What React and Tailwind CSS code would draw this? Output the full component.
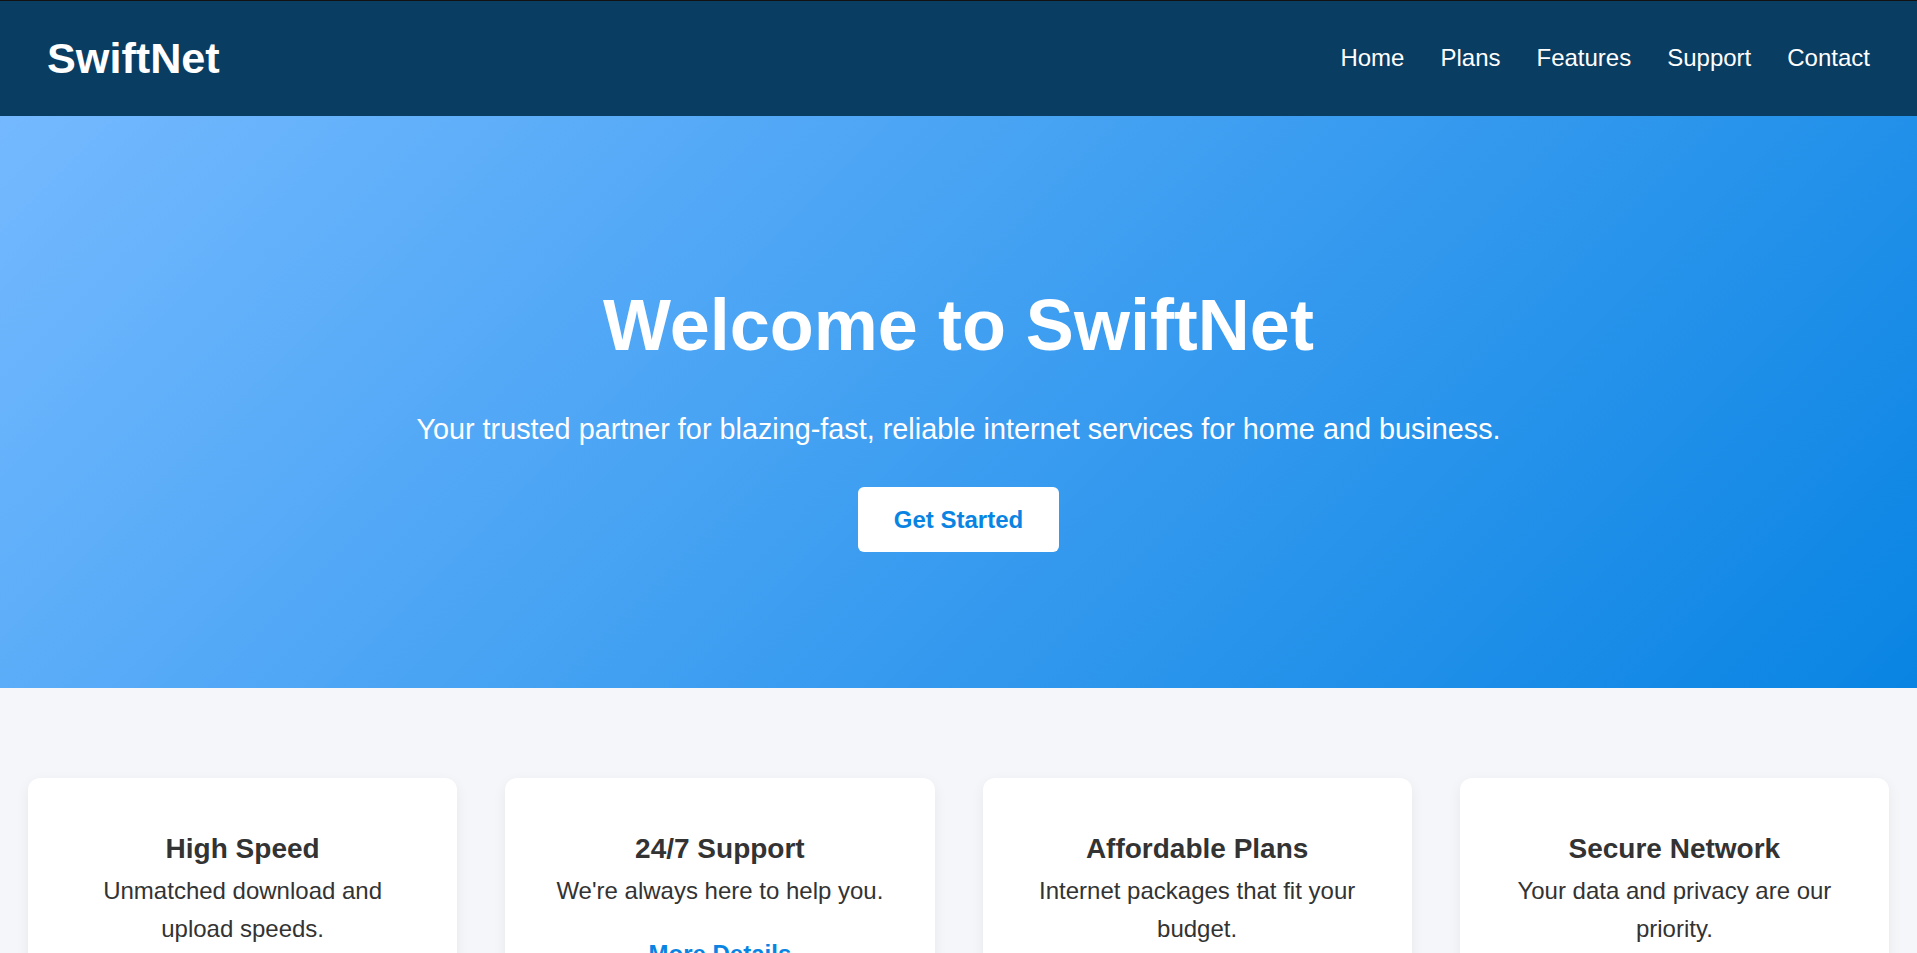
import React from 'react';

const navLinks = ['Home', 'Plans', 'Features', 'Support', 'Contact'];

const features = [
  { title: 'High Speed', text: 'Unmatched download and upload speeds.' },
  { title: '24/7 Support', text: "We're always here to help you." },
  { title: 'Affordable Plans', text: 'Internet packages that fit your budget.' },
  { title: 'Secure Network', text: 'Your data and privacy are our priority.' },
];

const App = () => {
  return (
    <div className="min-h-screen bg-[#f5f6fa] font-['Liberation_Sans',Arial,sans-serif] text-[#333333]">
      {/* Header */}
      <header className="flex h-[116px] items-center justify-between border-t border-[#121212] bg-[#0a3d62] pl-[47px] pr-[47px] pb-[2px] text-white">
        <div className="text-[43.2px] font-bold leading-[48px]">SwiftNet</div>
        <nav className="flex gap-[36px] text-[24px] leading-[28px]">
          {navLinks.map((link) => (
            <a key={link} href="#" className="text-white">
              {link}
            </a>
          ))}
        </nav>
      </header>

      {/* Hero */}
      <section className="flex h-[572px] flex-col items-center bg-[linear-gradient(135deg,#74b9ff,#0984e3)] pt-[152px] text-center text-white">
        <h1 className="text-[72px] font-bold leading-[1.6]">Welcome to SwiftNet</h1>
        <p className="mt-[23px] text-[28.8px] leading-[1.6]">
          Your trusted partner for blazing-fast, reliable internet services for home and business.
        </p>
        <a
          href="#"
          className="mt-[35px] flex h-[65px] items-center rounded-[6px] bg-white px-[36px] text-[24px] font-bold text-[#0984e3]"
        >
          Get Started
        </a>
      </section>

      {/* Features */}
      <section className="grid grid-cols-4 gap-[48px] px-[28px] pt-[90px] pb-[72px]">
        {features.map((f) => (
          <div
            key={f.title}
            className="rounded-[12px] bg-white px-[48px] pt-[49px] pb-[48px] text-center shadow-[0_4px_14px_rgba(0,0,0,0.06)]"
          >
            <h3 className="text-[28px] font-bold leading-[1.6]">{f.title}</h3>
            <p className="text-[24px] leading-[1.6]">{f.text}</p>
            <a href="#" className="mt-[25px] inline-block text-[24px] font-bold leading-[1.6] text-[#0984e3]">
              More Details
            </a>
          </div>
        ))}
      </section>
    </div>
  );
};

export default App;
